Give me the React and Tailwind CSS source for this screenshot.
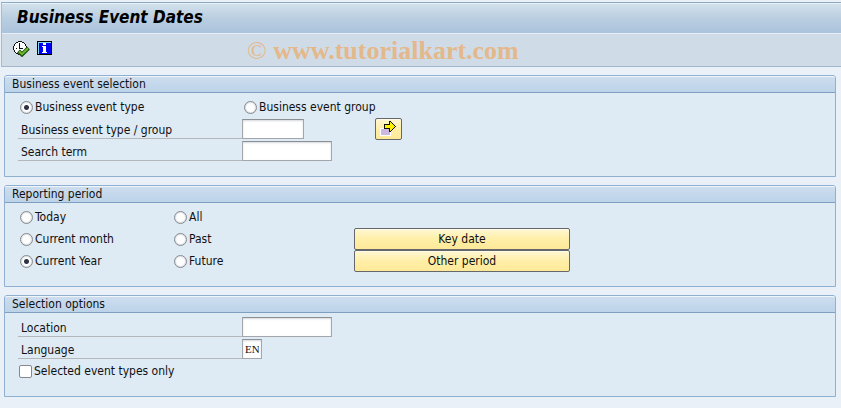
import React, { useState } from "react";
import clsx from "clsx";

function ExecuteIcon() {
  return (
    <svg width="17" height="16" viewBox="0 0 17 16" fill="none" shapeRendering="crispEdges">
      <path d="M5 1h4v1h2v1h1v2h1v4h-1v2h-1v1H9v1H5v-1H3v-1H2V9H1V5h1V3h1V2h2z" fill="#fff" />
      <path
        d="M5 .5h4M3 1.5h2M9 1.5h2M2 2.5h1M11 2.5h1M1 3.5h1M1 4.5h1M12 3.5h1M12 4.5h1M.5 5v4M13.5 5v3M1 9.5h1M1 10.5h1M2 11.5h1M3 12.5h2M5 13.5h3"
        stroke="#111"
      />
      <path d="M6.5 2v6M6 7.5h4M3 7.5h1" stroke="#111" />
      <g shapeRendering="auto">
        <path d="M5.5 10l3.5 3.5L15.5 7" stroke="#1c4a10" strokeWidth="4" />
        <path d="M6 10.2l3 3L15 7.2" stroke="#6cbc2a" strokeWidth="2" />
      </g>
    </svg>
  );
}

function InfoIcon() {
  return (
    <svg width="15" height="14" viewBox="0 0 15 14" shapeRendering="crispEdges">
      <path d="M0 0h15v14H0z" fill="#000" />
      <path d="M1 1h13v12H1z" fill="#87d7ee" />
      <path d="M2 2h12v11H2z" fill="#0000f5" />
      <path d="M6 2h3v2H6zM5 5h4v6h1v1H5v-1h1V6H5z" fill="#fff" />
    </svg>
  );
}

function MultiSelectIcon() {
  return (
    <svg width="17" height="16" viewBox="0 0 17 16" shapeRendering="crispEdges">
      <path d="M0 7h11v8H0z" fill="#fff" />
      <path d="M1 8h9v6H1z" fill="#cdb8df" />
      <path d="M9 0h2v1h1v1h1v1h1v1h1v1h1v1h-1v1h-1v1h-1v1h-1v1h-1v1H9V8H4V3h5z" fill="#111" />
      <path d="M10 1h1v1h1v1h1v1h1v1h1v1h-1v1h-1v1h-1v1h-1v1h-1V7H5V4h5z" fill="#fff000" />
    </svg>
  );
}

function Panel({ title, children }) {
  return (
    <section className="rounded-t-[3px] border border-[#8fb0d0] bg-[#deeaf4]">
      <h2 className="h-[17px] rounded-t-[2px] border-t border-b border-t-[#eef5fb] border-b-[#7f9fc2] bg-linear-to-b from-[#cdddee] to-[#bcd3e9] pl-[7px] leading-[15px]">
        {title}
      </h2>
      <div className="px-[13px] pt-[3px] pb-[14px]">{children}</div>
    </section>
  );
}

function Radio({ name, label, value, selected, onSelect }) {
  return (
    <label className="flex h-[22px] items-center gap-0.5">
      <input
        type="radio"
        name={name}
        checked={selected === value}
        onChange={() => onSelect(value)}
        className="size-[13px] appearance-none rounded-full border border-[#85898e] bg-white shadow-[inset_0_0_1px_1px_#dcdfe2] checked:bg-[radial-gradient(circle,#2e3346_2px,#fff_3px)]"
      />
      {label}
    </label>
  );
}

function Field({ id, label, className, value, onChange, children }) {
  return (
    <div className="flex h-[22px] items-start">
      <label htmlFor={id} className="mt-px h-5 w-56 border-b border-[#b5b8bb] pl-[3px] leading-[22px]">
        {label}
      </label>
      <input
        id={id}
        type="text"
        value={value}
        onChange={(e) => onChange(e.target.value)}
        className={clsx(
          "mt-px h-5 border border-[#a3a7ab] border-t-[#8c9095] bg-white px-0.5 font-['Liberation_Serif',serif] text-[11px] shadow-[inset_0_1px_2px_#d5d8dc]",
          className
        )}
      />
      {children}
    </div>
  );
}

const buttonStyle =
  "flex h-[22px] items-center justify-center rounded-[2px] border border-[#66676a] bg-linear-to-b from-[#fff7d2] via-[#ffefa8] to-[#fde998] shadow-[inset_0_1px_0_#fffbe8]";

export default function App() {
  const [eventMode, setEventMode] = useState("type");
  const [period, setPeriod] = useState("year");
  const [eventType, setEventType] = useState("");
  const [searchTerm, setSearchTerm] = useState("");
  const [location, setLocation] = useState("");
  const [language, setLanguage] = useState("EN");
  const [selectedOnly, setSelectedOnly] = useState(false);

  const periodProps = { name: "period", selected: period, onSelect: setPeriod };

  return (
    <div className="min-h-screen bg-[#e9f0f7] pt-0.5 pl-px font-['DejaVu_Sans_Condensed','DejaVu_Sans',sans-serif] text-[12px] text-[#101010]">
      <header className="border-t border-b border-l border-t-[#8fa9c0] border-b-[#a3b5c8] border-l-[#a9bbcf]">
        <h1 className="h-[31px] border-t border-b border-t-[#e8f1f8] border-b-[#e6eef6] bg-linear-to-b from-[#d2e0ec] via-[#b9cee0] to-[#abc3dd] pl-[15px] text-[17px] leading-[26px] font-bold text-black italic">
          Business Event Dates
        </h1>
        <div className="flex h-8 items-start bg-[#cfdce7] pt-[7px] pl-[11px]">
          <button type="button" aria-label="Execute">
            <ExecuteIcon />
          </button>
          <button type="button" aria-label="Information" className="ml-[7px]">
            <InfoIcon />
          </button>
          <p className="ml-[195px] font-['Liberation_Serif',serif] text-[26px] leading-5 font-bold text-[#e4b88a]">
            <span className="font-normal">©</span> www.tutorialkart.com
          </p>
        </div>
      </header>

      <main className="flex flex-col gap-2 py-2 pr-[5px] pl-[3px]">
        <Panel title="Business event selection">
          <div className="grid grid-cols-[224px_1fr] pl-0.5">
            <Radio name="mode" label="Business event type" value="type" selected={eventMode} onSelect={setEventMode} />
            <Radio name="mode" label="Business event group" value="group" selected={eventMode} onSelect={setEventMode} />
          </div>
          <Field id="eventType" label="Business event type / group" className="w-[62px]" value={eventType} onChange={setEventType}>
            <button type="button" aria-label="Multiple selection" className={clsx(buttonStyle, "ml-[71px] w-[27px]")}>
              <MultiSelectIcon />
            </button>
          </Field>
          <Field id="searchTerm" label="Search term" className="w-[90px]" value={searchTerm} onChange={setSearchTerm} />
        </Panel>

        <Panel title="Reporting period">
          <div className="grid grid-cols-[154px_180px_216px] pl-0.5">
            <Radio {...periodProps} label="Today" value="today" />
            <Radio {...periodProps} label="All" value="all" />
            <span />
            <Radio {...periodProps} label="Current month" value="month" />
            <Radio {...periodProps} label="Past" value="past" />
            <button type="button" className={buttonStyle}>Key date</button>
            <Radio {...periodProps} label="Current Year" value="year" />
            <Radio {...periodProps} label="Future" value="future" />
            <button type="button" className={buttonStyle}>Other period</button>
          </div>
        </Panel>

        <Panel title="Selection options">
          <Field id="location" label="Location" className="w-[90px]" value={location} onChange={setLocation} />
          <Field id="language" label="Language" className="w-5" value={language} onChange={setLanguage} />
          <label className="flex h-[22px] items-center gap-0.5 pl-px">
            <input
              type="checkbox"
              checked={selectedOnly}
              onChange={(e) => setSelectedOnly(e.target.checked)}
              className="size-[13px] appearance-none rounded-[2px] border border-[#85898e] bg-white checked:bg-[#2e3346]"
            />
            Selected event types only
          </label>
        </Panel>
      </main>
    </div>
  );
}
